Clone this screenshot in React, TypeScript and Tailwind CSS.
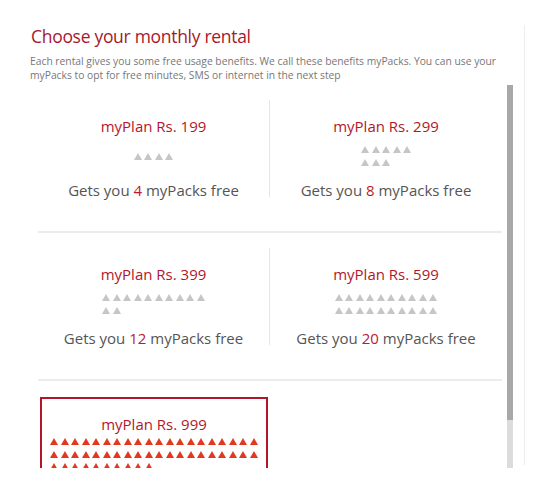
import React from 'react';

type Plan = {
  price: number;
  packs: number;
  rows: number[];
  selected?: boolean;
};

const PLANS: Plan[] = [
  { price: 199, packs: 4, rows: [4] },
  { price: 299, packs: 8, rows: [5, 3] },
  { price: 399, packs: 12, rows: [10, 2] },
  { price: 599, packs: 20, rows: [10, 10] },
  { price: 999, packs: 50, rows: [20, 20, 10], selected: true },
];

const Pack = ({ red }: { red?: boolean }) => (
  <svg width="8" height="7" viewBox="0 0 8 7" className="block">
    <polygon points="4,0 8,7 0,7" fill={red ? '#e2381f' : '#c6c6c6'} />
  </svg>
);

const PlanCell = ({ plan, last }: { plan: Plan; last?: boolean }) => {
  const box = plan.selected
    ? 'border-2 border-[#b3162b] mx-[2px] pt-[15px] mt-[1px]'
    : last
    ? 'pt-[16px] h-[97px]'
    : 'border-r border-[#e6e6e6] pt-[16px] h-[97px]';
  return (
    <div className="w-[232px] pt-[15px]">
      <div className={`${box} flex flex-col items-center`}>
        <div className="text-[15px] leading-[20px] text-[#b3162b]">myPlan Rs. {plan.price}</div>
        <div className="min-h-[40px] flex flex-col justify-center">
          <div className="flex flex-col items-start">
            {plan.rows.map((n, i) => (
              <div key={i} className="h-[12.5px] flex items-center gap-x-[2.5px]">
                {Array.from({ length: n }).map((_, j) => (
                  <Pack key={j} red={plan.selected} />
                ))}
              </div>
            ))}
          </div>
        </div>
        {!plan.selected && (
          <div className="mt-[4px] text-[15px] leading-[20px] text-[#555]">
            Gets you <span className="text-[#c0182e]">{plan.packs}</span> myPacks free
          </div>
        )}
      </div>
    </div>
  );
};

export default function App() {
  const rows: Plan[][] = [];
  for (let i = 0; i < PLANS.length; i += 2) rows.push(PLANS.slice(i, i + 2));

  return (
    <div className="w-[560px] h-[491px] bg-white pl-[30px] pt-[25px] font-['Open_Sans',sans-serif]">
      <div className="w-[495px] h-[440px] border-r border-[#ececec] flex flex-col">
        <h1 className="text-[17.5px] leading-[22px] tracking-[-0.3px] text-[#a8172b] pl-[1px]">Choose your monthly rental</h1>
        <p className="mt-[8px] text-[10.3px] leading-[13.5px] text-[#777] pr-[4px]">
          Each rental gives you some free usage benefits. We call these benefits myPacks. You can use your myPacks to opt for free minutes, SMS or internet in the next step
        </p>
        <div className="flex mt-[3px] h-[383px]">
          <div className="w-[472px] pl-[8px] overflow-hidden">
            {rows.map((r, i) => (
              <div key={i} className="w-[464px] h-[148px] shrink-0 border-b-2 border-[#ececec] flex">
                {r.map((p, j) => (
                  <PlanCell key={p.price} plan={p} last={j === 1} />
                ))}
              </div>
            ))}
          </div>
          <div className="ml-[5px] w-[6px] h-[383px] bg-[#dcdcdc]">
            <div className="h-[335px] bg-[#a8a8a8]" />
          </div>
        </div>
      </div>
    </div>
  );
}
